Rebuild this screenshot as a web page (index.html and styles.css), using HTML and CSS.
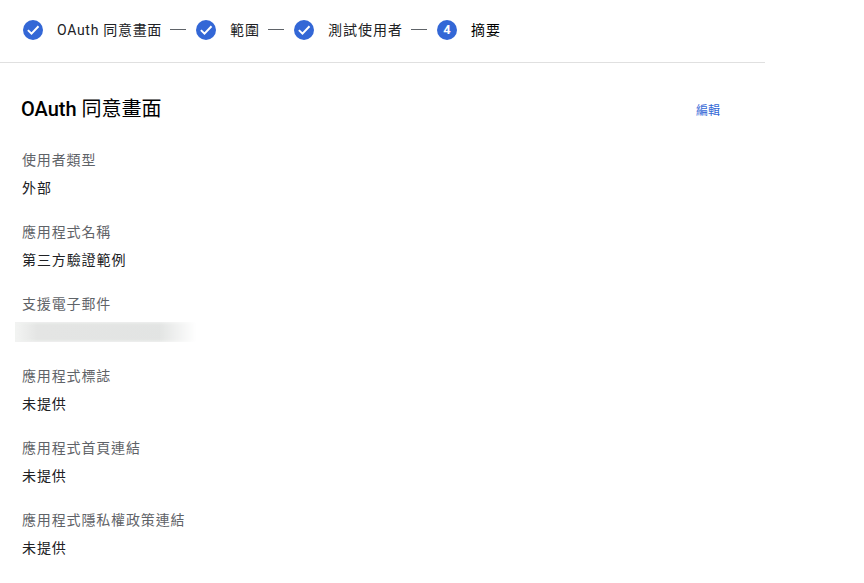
FILE: index.html
```html
<!DOCTYPE html>
<html lang="zh-Hant">
<head>
<meta charset="utf-8">
<title>OAuth 同意畫面</title>
<link rel="stylesheet" href="styles.css">
</head>
<body>
<div class="page">
  <header class="stepper">
    <div class="step">
      <svg class="step-icon" viewBox="0 0 20 20"><circle cx="10" cy="10" r="10" fill="#3367d6"/><path d="M4.9 10.1l3.6 3.5 7-7.3" fill="none" stroke="#fff" stroke-width="2"/></svg>
      <span class="step-label step-label-latin">OAuth 同意畫面</span>
    </div>
    <span class="step-line"></span>
    <div class="step">
      <svg class="step-icon" viewBox="0 0 20 20"><circle cx="10" cy="10" r="10" fill="#3367d6"/><path d="M4.9 10.1l3.6 3.5 7-7.3" fill="none" stroke="#fff" stroke-width="2"/></svg>
      <span class="step-label">範圍</span>
    </div>
    <span class="step-line"></span>
    <div class="step">
      <svg class="step-icon" viewBox="0 0 20 20"><circle cx="10" cy="10" r="10" fill="#3367d6"/><path d="M4.9 10.1l3.6 3.5 7-7.3" fill="none" stroke="#fff" stroke-width="2"/></svg>
      <span class="step-label">測試使用者</span>
    </div>
    <span class="step-line"></span>
    <div class="step">
      <span class="step-num">4</span>
      <span class="step-label step-current">摘要</span>
    </div>
  </header>
  <main class="content">
    <div class="title-row">
      <h1 class="title"><span class="title-en">OAuth</span> 同意畫面</h1>
      <a class="edit">編輯</a>
    </div>
    <dl class="fields">
      <div class="field"><dt class="label">使用者類型</dt><dd class="value">外部</dd></div>
      <div class="field"><dt class="label">應用程式名稱</dt><dd class="value">第三方驗證範例</dd></div>
      <div class="field"><dt class="label">支援電子郵件</dt><dd class="value"><span class="redacted"></span></dd></div>
      <div class="field"><dt class="label">應用程式標誌</dt><dd class="value">未提供</dd></div>
      <div class="field"><dt class="label">應用程式首頁連結</dt><dd class="value">未提供</dd></div>
      <div class="field"><dt class="label">應用程式隱私權政策連結</dt><dd class="value">未提供</dd></div>
    </dl>
  </main>
</div>
</body>
</html>
```
FILE: styles.css
```css
* { box-sizing: border-box; }
html, body { margin: 0; padding: 0; background: #fff; overflow: hidden; }
body {
  height: 583px;
  font-family: Roboto, "Noto Sans CJK TC", sans-serif;
  color: #202124;
}
.page { width: 765px; }
.stepper {
  display: flex;
  align-items: center;
  height: 63px;
  padding: 0 0 3px 23px;
  border-bottom: 1px solid #e0e0e0;
}
.step { display: flex; align-items: center; gap: 14px; }
.step-icon { width: 20px; height: 20px; display: block; flex: none; }
.step-num {
  width: 20px;
  height: 20px;
  border-radius: 50%;
  background: #3367d6;
  color: #fff;
  font-size: 13px;
  font-weight: 700;
  line-height: 20px;
  text-align: center;
  flex: none;
}
.step-label { font-size: 14px; line-height: 20px; letter-spacing: 1px; color: #202124; white-space: nowrap; }
.step-label-latin { letter-spacing: 0.7px; }
.step-current { color: #000; }
.step-line { width: 16px; height: 1px; background: #5f6368; margin: 0 10px 0 8px; flex: none; }
.content { padding: 0 45px 0 21px; }
.title-row {
  display: flex;
  justify-content: space-between;
  align-items: center;
  height: 28px;
  margin-top: 32px;
}
.title { margin: 0; font-size: 20px; line-height: 28px; font-weight: 400; color: #000; }
.title-en { font-weight: 500; }
.edit { font-size: 12px; line-height: 16px; color: #3367d6; margin-top: 4px; }
.fields { margin: 0; padding: 22px 0 0 1px; }
.field { height: 72px; padding-top: 5px; }
.label { font-size: 14px; line-height: 20px; letter-spacing: 0.85px; color: #5f6368; }
.value { margin: 8px 0 0; font-size: 14px; line-height: 20px; letter-spacing: 0.9px; color: #202124; height: 20px; }
.redacted {
  display: block;
  width: 185px;
  height: 20px;
  margin-left: -7px;
  background: linear-gradient(90deg, #f3f4f3 0, #e4e5e4 12%, #e2e4e3 100%);
  box-shadow: inset 0 2px 3px -1px #f1f2f1, inset 0 -2px 3px -1px #f1f2f1;
  -webkit-mask-image: linear-gradient(90deg, #000 78%, transparent 98%);
  mask-image: linear-gradient(90deg, #000 78%, transparent 98%);
}
```
